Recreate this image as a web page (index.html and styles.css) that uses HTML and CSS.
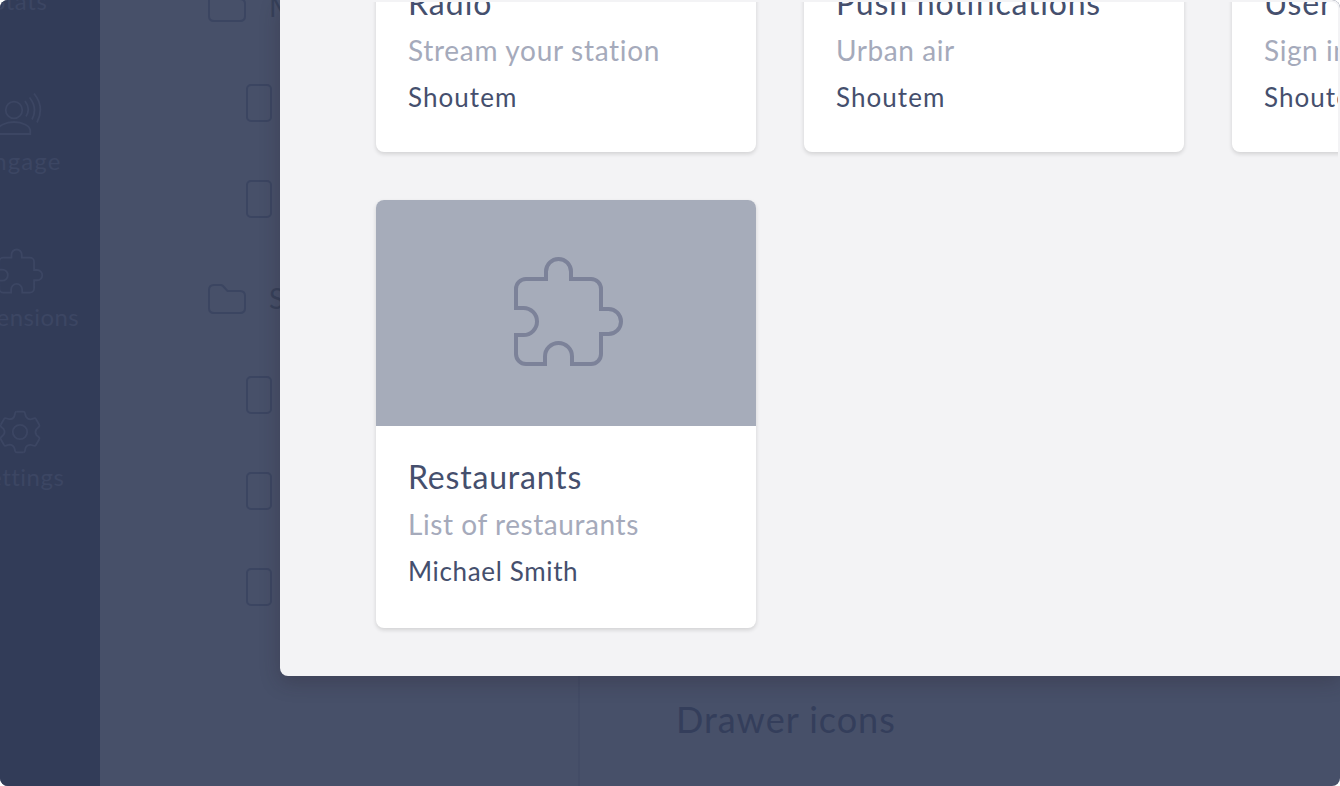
FILE: index.html
```html
<!DOCTYPE html>
<html lang="en">
<head>
<meta charset="utf-8">
<title>Add screen</title>
<link rel="stylesheet" href="styles.css">
</head>
<body>
<svg class="defs" aria-hidden="true">
  <symbol id="folder" viewBox="0 0 38 32"><path d="M6 2H12.500Q14 2 15 3L19.500 8H32Q37 8 37 13V25Q37 30 32 30H6Q1 30 1 25V7Q1 2 6 2Z"/></symbol>
  <path id="puzzle" d="M26 68V49A10 10 0 0 1 36 39H56V31.5A12.5 12.5 0 0 1 81 31.5V39H101A10 10 0 0 1 111 49V69H118.5A12.5 12.5 0 0 1 118.5 94H111V114A10 10 0 0 1 101 124H82V116.5A13.5 13.5 0 0 0 55 116.5V124H36A10 10 0 0 1 26 114V95H33.5A13.5 13.5 0 0 0 33.5 68Z"/>
  <path id="tooth" d="M-3.3 -20.3H3.3Q4.6 -20.3 4.9 -19L5.7 -15.8Q7.2 -12.6 10.6 -12.7L14 -13.7Q15.3 -14.1 16 -13"/>
</svg>
<div class="screen">
  <nav class="sidebar">
    <a class="nav-item"><svg class="nav-icon" viewBox="0 0 48 48"><path d="M8 44V28M24 44V8M40 44V18"/></svg><span class="nav-label stats">Stats</span></a>
    <a class="nav-item short"><svg class="nav-icon" viewBox="-4 91 48 48"><circle cx="14" cy="110" r="8.3"/><path d="M-2.5 134H30.3V131C30.3 125.500 22 122 14 122S-2.500 125.500 -2.500 131ZM25 101Q31 109 26 116.500M29.500 97.500Q38 108 32 119.500M34 93.500Q45 107 37 122.500"/></svg><span class="nav-label engage">Engage</span></a>
    <a class="nav-item"><svg class="nav-icon small-puzzle" viewBox="18.2 12.900 117 117"><use href="#puzzle"/></svg><span class="nav-label extensions">Extensions</span></a>
    <a class="nav-item"><svg class="nav-icon" viewBox="-24 -25 48 48"><circle r="7.2"/><use href="#tooth"/><use href="#tooth" transform="rotate(60)"/><use href="#tooth" transform="rotate(120)"/><use href="#tooth" transform="rotate(180)"/><use href="#tooth" transform="rotate(240)"/><use href="#tooth" transform="rotate(300)"/></svg><span class="nav-label settings">Settings</span></a>
  </nav>
  <section class="tree">
    <div class="group">
      <div class="row"><svg class="folder"><use href="#folder"/></svg><span>M</span></div>
      <div class="row child"><i class="file"></i></div>
      <div class="row child"><i class="file"></i></div>
    </div>
    <div class="group">
      <div class="row"><svg class="folder"><use href="#folder"/></svg><span>S</span></div>
      <div class="row child"><i class="file"></i></div>
      <div class="row child"><i class="file"></i></div>
      <div class="row child"><i class="file"></i></div>
    </div>
  </section>
  <main class="content"><h2 class="heading">Drawer icons</h2></main>

  <div class="modal">
    <div class="viewport">
      <div class="grid">
        <article class="card">
          <div class="thumb"></div>
          <div class="body"><h3 class="title radio">Radio</h3><p class="summary stream">Stream your station</p><p class="author shoutem">Shoutem</p></div>
        </article>
        <article class="card">
          <div class="thumb"></div>
          <div class="body"><h3 class="title push">Push notifications</h3><p class="summary urban">Urban air</p><p class="author shoutem">Shoutem</p></div>
        </article>
        <article class="card">
          <div class="thumb"></div>
          <div class="body"><h3 class="title push">User</h3><p class="summary urban">Sign in</p><p class="author shoutem">Shoutem</p></div>
        </article>
        <article class="card">
          <div class="thumb"><svg class="puzzle" viewBox="1 -2 150 150"><use href="#puzzle"/></svg></div>
          <div class="body"><h3 class="title restaurants">Restaurants</h3><p class="summary list">List of restaurants</p><p class="author michael">Michael Smith</p></div>
        </article>
      </div>
    </div>
  </div>
</div>
</body>
</html>
```

FILE: styles.css
```css
* { box-sizing: border-box; }
body { margin: 0; background: #fff; font-family: Lato, "Open Sans", sans-serif; font-variant-ligatures: none; overflow: hidden; }
h2, h3, p { margin: 0; font-weight: 400; white-space: nowrap; }
svg { fill: none; display: block; }
.defs { position: absolute; width: 0; height: 0; }

.screen { position: relative; display: flex; width: 1340px; height: 786px; overflow: hidden; border-radius: 8px; background: #475069; }

.sidebar { flex: none; width: 160px; margin-left: -60px; height: 786px; overflow: hidden; background: #323c58; }
.nav-item { display: flex; flex-direction: column; align-items: center; gap: 7px; height: 160px; color: #3c4663; }
.nav-item:first-child { margin-top: -69px; }
.nav-item.short { height: 156px; }
.nav-icon { flex: none; width: 48px; height: 48px; stroke: #3c4663; stroke-width: 1.8; }
.small-puzzle { stroke-width: 4.4; }
.nav-label { font-size: 24px; line-height: 30px; letter-spacing: .4px; }
.stats { letter-spacing: .6px; }
.engage { letter-spacing: 1.1px; }
.settings { letter-spacing: .5px; }

.tree { flex: none; width: 480px; border-right: 2px solid #434c66; }
.group { margin-bottom: 4px; }
.group:first-child { margin-top: -41px; }
.row { display: flex; align-items: center; gap: 23px; height: 96px; padding-left: 108px; font-size: 28px; color: #364059; }
.row.child { padding-left: 146px; }
.row span { padding-bottom: 2px; }
.folder { width: 38px; height: 32px; margin-top: -1px; stroke: #3b4561; stroke-width: 2; }
.file { width: 26px; height: 38px; border: 2px solid #3b4561; border-radius: 5px; }

.content { padding: 694px 0 0 96px; }
.heading { font-size: 36px; line-height: 50px; letter-spacing: 1px; color: #343e5b; }

.modal { position: absolute; top: 0; left: 280px; right: 0; height: 676px; padding: 2px 2px 0 0; border-radius: 0 0 0 8px; background: #f3f3f5; box-shadow: 0 6px 20px rgba(40, 30, 40, .28); }
.viewport { height: 674px; overflow: hidden; border-top-right-radius: 6px; }
.grid { display: grid; grid-template-columns: repeat(3, 380px); grid-template-rows: 426px 428px; gap: 48px; margin: -276px 0 0 96px; }
.card { border-radius: 8px; background: #fff; box-shadow: 0 2px 4px rgba(0, 0, 0, .14); }
.thumb { display: flex; align-items: center; justify-content: center; height: 226px; border-radius: 8px 8px 0 0; background: #a6acba; }
.puzzle { width: 150px; height: 150px; stroke: #7c8299; stroke-width: 4; }
.body { padding: 27px 32px 0; }
.title { font-size: 32px; line-height: 48px; letter-spacing: .8px; color: #454f6d; }
.summary { font-size: 28px; line-height: 46px; letter-spacing: .57px; color: #a5aabb; }
.author { font-size: 26px; line-height: 48px; letter-spacing: .65px; color: #454f6d; }
.radio { letter-spacing: 1px; }
.stream { letter-spacing: .7px; }
.shoutem { letter-spacing: 1.05px; }
```
